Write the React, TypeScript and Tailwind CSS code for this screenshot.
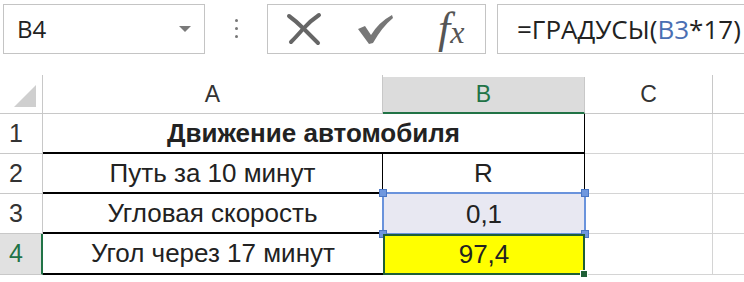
import React from 'react';

const cellFont = { fontFamily: '"Liberation Sans", Arial, sans-serif' };

const Handle = ({ className }: { className: string }) => (
  <div className={`absolute w-[8px] h-[8px] bg-[#6f97de] border border-[#4a76c4] ${className}`}></div>
);

const App = () => {
  return (
    <div className="w-[744px] h-[282px] bg-white overflow-hidden text-[#222]" style={cellFont}>
      {/* formula bar */}
      <div className="flex h-[54px] pt-[4px]">
        <div className="ml-[3px] w-[202px] border border-[#c4c4c4] flex items-center pl-[13px] pr-[12px]">
          <span className="text-[24px] flex-1" style={{ fontFamily: '"Open Sans", sans-serif' }}>B4</span>
          <svg width="14" height="8" viewBox="0 0 14 8">
            <path d="M1 1 L13 1 L7 7 Z" fill="#7a7a7a" />
          </svg>
        </div>
        <div className="w-[62px] flex flex-col items-center justify-center gap-[5px] pb-[2px]">
          <div className="w-[3px] h-[3px] rounded-full bg-[#777]"></div>
          <div className="w-[3px] h-[3px] rounded-full bg-[#777]"></div>
          <div className="w-[3px] h-[3px] rounded-full bg-[#777]"></div>
        </div>
        <div className="w-[219px] border border-[#c4c4c4] flex items-center pl-[18px] gap-[34px]">
          <svg width="36" height="34" viewBox="0 0 36 34">
            <path d="M3 4 Q10 9 18 17 Q26 25 32 31" stroke="#666" strokeWidth="4" fill="none" strokeLinecap="round" />
            <path d="M33 3 Q24 9 17 17 Q10 25 5 30" stroke="#666" strokeWidth="4" fill="none" strokeLinecap="round" />
          </svg>
          <svg width="38" height="34" viewBox="0 0 38 34">
            <path d="M2 17 L9 14 L15 23 Q23 10 36 3 L37 6 Q26 15 17 31 L13 32 Z" fill="#777" />
          </svg>
          <span className="ml-[10px] italic text-[#555] leading-none whitespace-nowrap" style={{ fontFamily: '"Liberation Serif", serif' }}>
            <span className="text-[44px]">f</span>
            <span className="text-[32px]">x</span>
          </span>
        </div>
        <div className="ml-[11px] flex-1 border border-r-0 border-[#c4c4c4] flex items-center pl-[19px]">
          <span className="text-[26px] whitespace-nowrap" style={{ fontFamily: '"Open Sans", sans-serif' }}>
            =ГРАДУСЫ(<span className="text-[#4a6fb3]">B3</span>*17)
          </span>
        </div>
      </div>

      <div className="h-[21px]"></div>

      {/* sheet */}
      <div className="grid grid-cols-[43px_340px_202px_128px_1fr] grid-rows-[39px_40px_40px_40px_41px_1fr] text-[26px]">
        {/* header row */}
        <div className="border-r border-b border-[#c8c8c8] flex items-end justify-end pr-[6px] pb-[6px]">
          <svg width="22" height="22" viewBox="0 0 22 22">
            <path d="M22 0 L22 22 L0 22 Z" fill="#cfcfcf" />
          </svg>
        </div>
        <div className="border-r border-b border-[#c8c8c8] flex items-center justify-center text-[#333] text-[23px]">A</div>
        <div className="mt-[2px] bg-[#dcdcdc] border-r border-[#c8c8c8] border-b-2 border-b-[#217346] flex items-center justify-center text-[#217346] text-[23px]">B</div>
        <div className="border-r border-b border-[#c8c8c8] flex items-center justify-center text-[#333] text-[23px]">C</div>
        <div className="border-b border-[#c8c8c8]"></div>

        {/* row 1 */}
        <div className="border-r border-b border-[#c8c8c8] flex items-center pl-[9px] text-[#333] text-[25px]">1</div>
        <div className="col-span-2 border-r border-r-black border-b-2 border-b-black flex items-center justify-center font-bold">
          Движение автомобиля
        </div>
        <div className="border-r border-b border-[#d4d4d4]"></div>
        <div className="border-b border-[#d4d4d4]"></div>

        {/* row 2 */}
        <div className="border-r border-b border-[#c8c8c8] flex items-center pl-[9px] text-[#333] text-[25px]">2</div>
        <div className="border-r border-r-black border-b-2 border-b-black flex items-center justify-center">Путь за 10 минут</div>
        <div className="border-r border-r-black border-b-2 border-b-black flex items-center justify-center">R</div>
        <div className="border-r border-b border-[#d4d4d4]"></div>
        <div className="border-b border-[#d4d4d4]"></div>

        {/* row 3 */}
        <div className="border-r border-b border-[#c8c8c8] flex items-center pl-[9px] text-[#333] text-[25px]">3</div>
        <div className="border-r border-r-black border-b-2 border-b-black flex items-center justify-center">Угловая скорость</div>
        <div className="relative bg-[#e8e8f2] flex items-center justify-center">
          0,1
          <div className="absolute -top-[2px] -left-[1px] -right-[1px] -bottom-[1px] border-2 border-[#6a93dc]"></div>
          <Handle className="-top-[5px] -left-[4px]" />
          <Handle className="-top-[5px] -right-[4px]" />
          <Handle className="-bottom-[4px] -left-[4px]" />
          <Handle className="-bottom-[4px] -right-[4px]" />
        </div>
        <div className="border-r border-b border-[#d4d4d4]"></div>
        <div className="border-b border-[#d4d4d4]"></div>

        {/* row 4 */}
        <div className="bg-[#e1e1e1] border-r-2 border-r-[#217346] border-b border-b-[#c8c8c8] flex items-center pl-[9px] text-[#217346] text-[25px]">4</div>
        <div className="border-b-2 border-b-black flex items-center justify-center">Угол через 17 минут</div>
        <div className="relative bg-[#ffff00] border-2 border-[#1f5f36] flex items-center justify-center">
          97,4
          <div className="absolute -bottom-[5px] -right-[5px] w-[8px] h-[8px] bg-[#1f5f36] border border-white"></div>
        </div>
        <div className="border-r border-b border-[#d4d4d4]"></div>
        <div className="border-b border-[#d4d4d4]"></div>

        {/* row 5 */}
        <div className="border-r border-[#c8c8c8]"></div>
        <div></div>
        <div></div>
        <div className="border-r border-[#d4d4d4]"></div>
        <div></div>
      </div>
    </div>
  );
};

export default App;
